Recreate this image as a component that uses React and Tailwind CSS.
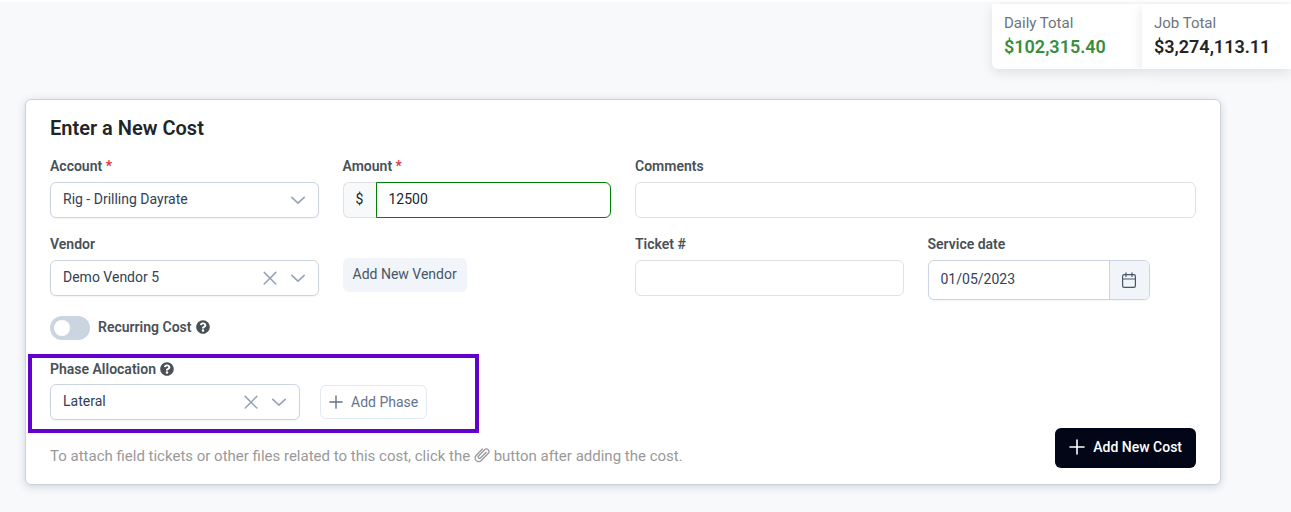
import React, { useState } from "react";
import { FaQuestionCircle } from "react-icons/fa";

const ChevronIcon = () => (
  <svg className="size-4" viewBox="0 0 16 16" fill="none" stroke="currentColor" strokeWidth="1.6" strokeLinecap="round" strokeLinejoin="round">
    <path d="M1.8 5.4 8 11.2l6.2-5.8" />
  </svg>
);

const CrossIcon = () => (
  <svg className="size-4" viewBox="0 0 16 16" fill="none" stroke="currentColor" strokeWidth="1.5" strokeLinecap="round">
    <path d="m2.2 2.4 11.6 11.6M13.8 2.4 2.2 14" />
  </svg>
);

const PlusIcon = ({ className }) => (
  <svg className={className} viewBox="0 0 16 16" fill="none" stroke="currentColor" strokeWidth="1.6" strokeLinecap="round">
    <path d="M8 1v14M1 8h14" />
  </svg>
);

const CalendarIcon = () => (
  <svg className="size-4" viewBox="0 0 16 16" fill="none" stroke="currentColor" strokeWidth="1.2" strokeLinecap="round" strokeLinejoin="round">
    <rect x="1.6" y="2.6" width="12.8" height="12.8" rx="1.6" />
    <path d="M1.6 7h12.8M5 .8v3.6M11 .8v3.6" />
  </svg>
);

const PaperclipIcon = () => (
  <svg className="inline-block size-4 -mt-1" viewBox="0 0 16 16" fill="none" stroke="currentColor" strokeWidth="1.3" strokeLinecap="round" strokeLinejoin="round">
    <path d="M12.2 5.2 6.6 11a1.4 1.4 0 0 1-2-2l6-6.2a2.5 2.5 0 0 1 3.7 3.5l-7 7.2a3.6 3.6 0 0 1-5.2-5L8.4 2" />
  </svg>
);

const Label = ({ htmlFor, required, children }) => (
  <label htmlFor={htmlFor} className="block mb-1.5 text-sm font-semibold text-[#495057]">
    {children}
    {required && <span className="text-[#dc3545]"> *</span>}
  </label>
);

const Dropdown = ({ id, value, options, onChange, clearable }) => (
  <div className="relative">
    <select
      id={id}
      value={value}
      onChange={(e) => onChange(e.target.value)}
      className="appearance-none block w-full h-9 pl-3 pr-16 pb-0.5 text-sm text-[#334155] bg-white border border-[#cbd5e1] rounded-md shadow-xs"
    >
      <option value=""></option>
      {options.map((option) => (
        <option key={option} value={option}>{option}</option>
      ))}
    </select>
    <div className="absolute inset-y-0 right-[13px] flex items-center gap-3 text-[#94a3b8] pointer-events-none">
      {clearable && (
        <button type="button" aria-label="Clear" onClick={() => onChange("")} className="pointer-events-auto">
          <CrossIcon />
        </button>
      )}
      <ChevronIcon />
    </div>
  </div>
);

const App = () => {
  const [formData, setFormData] = useState({
    account: "Rig - Drilling Dayrate",
    amount: "12500",
    comments: "",
    vendor: "Demo Vendor 5",
    ticket: "",
    serviceDate: "01/05/2023",
    recurring: false,
    phase: "Lateral",
  });

  const setField = (name, value) => setFormData({ ...formData, [name]: value });
  const handleChange = (e) => setField(e.target.name, e.target.value);

  return (
    <div className="min-h-screen bg-[#f8f9fb] border-t-2 border-white font-['Roboto',sans-serif]">
      <div className="flex justify-end pt-0.5">
        <div className="w-[150px] px-3 pt-[7px] pb-2.5 bg-white rounded-bl-md shadow-[0_4px_12px_#0000001a]">
          <p className="text-[15px] leading-6 text-[#6c757d]">Daily Total</p>
          <p className="text-lg leading-6 font-semibold text-[#388e3c]">$102,315.40</p>
        </div>
        <div className="w-[149px] px-3 pt-[7px] pb-2.5 bg-white shadow-[0_4px_12px_#0000001a]">
          <p className="text-[15px] leading-6 text-[#6c757d]">Job Total</p>
          <p className="text-lg leading-6 font-semibold text-[#212529]">$3,274,113.11</p>
        </div>
      </div>

      <form
        onSubmit={(e) => e.preventDefault()}
        className="mt-[30px] ml-[25px] mr-[70px] px-6 py-4 bg-white border border-[#ced0d4] rounded-md shadow-[0_2px_8px_#cbd5e1]"
      >
        <h2 className="mb-4 text-xl leading-6 font-semibold text-[#212529]">Enter a New Cost</h2>

        <div className="grid grid-cols-4 gap-x-6 gap-y-4">
          <div>
            <Label htmlFor="account" required>Account</Label>
            <Dropdown id="account" value={formData.account} options={["Rig - Drilling Dayrate"]} onChange={(v) => setField("account", v)} />
          </div>

          <div>
            <Label htmlFor="amount" required>Amount</Label>
            <div className="flex h-9">
              <span className="flex w-[33px] items-center justify-center pb-0.5 text-sm text-[#212529] bg-[#f8f9fa] border border-r-0 border-[#dee2e6] rounded-l-md">$</span>
              <input
                type="text"
                id="amount"
                name="amount"
                value={formData.amount}
                onChange={handleChange}
                className="flex-1 min-w-0 px-3 pb-0.5 text-sm text-[#212529] border border-[#008000] rounded-r-md"
              />
            </div>
          </div>

          <div className="col-span-2">
            <Label htmlFor="comments">Comments</Label>
            <input
              type="text"
              id="comments"
              name="comments"
              value={formData.comments}
              onChange={handleChange}
              className="block w-full h-9 px-3 text-sm border border-[#dee2e6] rounded-md"
            />
          </div>

          <div>
            <Label htmlFor="vendor">Vendor</Label>
            <Dropdown id="vendor" value={formData.vendor} options={["Demo Vendor 5"]} onChange={(v) => setField("vendor", v)} clearable />
          </div>

          <div className="pt-6">
            <button type="button" className="h-[34px] px-2.5 pb-0.5 text-sm text-[#475569] bg-[#f1f5f9] rounded-md">
              Add New Vendor
            </button>
          </div>

          <div>
            <Label htmlFor="ticket">Ticket #</Label>
            <input
              type="text"
              id="ticket"
              name="ticket"
              value={formData.ticket}
              onChange={handleChange}
              className="block w-full h-9 px-3 text-sm border border-[#dee2e6] rounded-md"
            />
          </div>

          <div>
            <Label htmlFor="serviceDate">Service date</Label>
            <div className="flex h-10 max-w-[222px] border border-[#cbd5e1] rounded-md shadow-xs overflow-hidden">
              <input
                type="text"
                id="serviceDate"
                name="serviceDate"
                value={formData.serviceDate}
                onChange={handleChange}
                className="flex-1 min-w-0 px-3 pb-0.5 text-sm text-[#334155]"
              />
              <button type="button" aria-label="Choose date" className="flex w-10 items-center justify-center text-[#475569] bg-[#f1f5f9] border-l border-[#cbd5e1]">
                <CalendarIcon />
              </button>
            </div>
          </div>
        </div>

        <div className="flex items-center gap-2 mt-4 text-sm font-semibold text-[#495057]">
          <input
            type="checkbox"
            role="switch"
            id="recurring"
            checked={formData.recurring}
            onChange={(e) => setField("recurring", e.target.checked)}
            className="appearance-none w-10 h-6 p-1 bg-[#cbd5e1] rounded-full checked:bg-[#388e3c] before:block before:size-4 before:rounded-full before:bg-white checked:before:ml-4"
          />
          <label htmlFor="recurring" className="flex items-center gap-1 pb-0.5">
            Recurring Cost
            <FaQuestionCircle />
          </label>
        </div>

        <div className="relative mt-[19px]">
          <label htmlFor="phase" className="flex items-center gap-1 mb-[5px] text-sm font-semibold text-[#495057]">
            Phase Allocation
            <FaQuestionCircle />
          </label>
          <div className="flex items-center gap-5">
            <div className="w-[250px]">
              <Dropdown id="phase" value={formData.phase} options={["Lateral"]} onChange={(v) => setField("phase", v)} clearable />
            </div>
            <button type="button" className="flex h-[34px] items-center gap-2 px-2 text-sm text-[#64748b] border border-[#e2e8f0] rounded-md">
              <PlusIcon className="size-3.5" />
              Add Phase
            </button>
          </div>
          <div className="absolute -top-[5px] -bottom-[13px] -left-[22px] w-[451px] border-4 border-[#6200cc] pointer-events-none"></div>
        </div>

        <div className="flex items-end justify-between mt-2">
          <p className="text-[15px] leading-6 text-[#999]">
            To attach field tickets or other files related to this cost, click the{" "}
            <PaperclipIcon />{" "}
            button after adding the cost.
          </p>
          <button type="submit" className="flex h-10 items-center gap-2 px-3.5 pb-0.5 text-sm font-medium text-white bg-[#020617] rounded-md">
            <PlusIcon className="size-4" />
            Add New Cost
          </button>
        </div>
      </form>
    </div>
  );
};

export default App;
